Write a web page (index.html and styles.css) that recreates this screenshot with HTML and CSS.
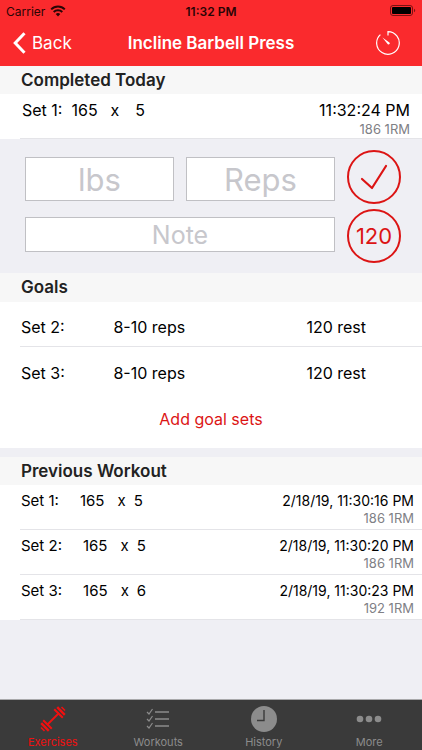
FILE: index.html
```html
<!DOCTYPE html>
<html lang="en">
<head>
    <meta charset="UTF-8">
    <meta name="viewport" content="width=device-width, initial-scale=1.0">
    <title>Incline Barbell Press</title>
    <link rel="stylesheet" href="styles.css">
</head>
<body>
    <!-- Status bar and navigation -->
    <header class="top">
        <div class="status-bar">
            <div class="carrier">
                <span>Carrier</span>
                <svg width="16" height="12" viewBox="0 0 16 12" fill="none" stroke="#2a0505" stroke-width="2">
                    <path d="M1.2 4.4a9.6 9.6 0 0 1 13.6 0"/>
                    <path d="M3.7 7a6.1 6.1 0 0 1 8.6 0"/>
                    <path d="M8 11.4 5.7 9a3.3 3.3 0 0 1 4.6 0Z" fill="#2a0505" stroke="none"/>
                </svg>
            </div>
            <span class="time">11:32 PM</span>
            <svg class="battery" width="26" height="12" viewBox="0 0 26 12">
                <rect x="0.5" y="0.5" width="22" height="10" rx="2.5" fill="none" stroke="#7a1212"/>
                <rect x="2" y="2" width="19" height="7" rx="1" fill="#000"/>
                <path d="M24 3.8c1.6.4 1.6 3 0 3.4Z" fill="#7a1212"/>
            </svg>
        </div>
        <nav class="nav-bar">
            <a href="#" class="back">
                <svg width="13" height="22" viewBox="0 0 13 22" fill="none" stroke="#fff" stroke-width="3">
                    <path d="M11.5 1.2 2.2 11l9.3 9.8"/>
                </svg>
                Back
            </a>
            <h1>Incline Barbell Press</h1>
            <button class="timer" aria-label="Rest timer">
                <svg width="26" height="26" viewBox="0 0 26 26" fill="none" stroke="#fff" stroke-width="1.2">
                    <path d="M13 5.5V1.7a11.3 11.3 0 1 1-7.6 2.9"/>
                    <path d="m7.4 7.4 7 5a1.2 1.2 0 0 1-1.6 1.8Z" fill="#fff" stroke="none"/>
                </svg>
            </button>
        </nav>
    </header>

    <main>
        <!-- Completed sets -->
        <section>
            <h2>Completed Today</h2>
            <ul class="sets completed">
                <li>
                    <div class="lift">
                        <span>Set 1:</span>
                        <span>165</span>
                        <span>x</span>
                        <span>5</span>
                    </div>
                    <div class="when">
                        <span>11:32:24 PM</span>
                        <small>186 1RM</small>
                    </div>
                </li>
            </ul>
        </section>

        <!-- New set form -->
        <form class="entry">
            <div class="fields">
                <input class="big" type="text" placeholder="lbs" aria-label="Weight in lbs">
                <input class="big" type="text" placeholder="Reps" aria-label="Reps">
                <input class="note" type="text" placeholder="Note" aria-label="Note">
            </div>
            <div class="actions">
                <button type="button" class="round" aria-label="Save set">
                    <svg width="28" height="26" viewBox="0 0 28 26" fill="none" stroke="#dc1414" stroke-width="2.2" stroke-linecap="round" stroke-linejoin="round">
                        <path d="M2 15l10 9L26 2"/>
                    </svg>
                </button>
                <button type="button" class="round">120</button>
            </div>
        </form>

        <!-- Goals -->
        <section class="goals">
            <h2>Goals</h2>
            <table>
                <tr>
                    <td>Set 2:</td>
                    <td>8-10 reps</td>
                    <td>120 rest</td>
                </tr>
                <tr>
                    <td>Set 3:</td>
                    <td>8-10 reps</td>
                    <td>120 rest</td>
                </tr>
            </table>
            <button class="add">Add goal sets</button>
        </section>

        <!-- Previous workout -->
        <section class="previous">
            <h2>Previous Workout</h2>
            <ul class="sets">
                <li>
                    <div class="lift">
                        <span>Set 1:</span>
                        <span>165</span>
                        <span>x</span>
                        <span>5</span>
                    </div>
                    <div class="when">
                        <span>2/18/19, 11:30:16 PM</span>
                        <small>186 1RM</small>
                    </div>
                </li>
                <li>
                    <div class="lift">
                        <span>Set 2:</span>
                        <span>165</span>
                        <span>x</span>
                        <span>5</span>
                    </div>
                    <div class="when">
                        <span>2/18/19, 11:30:20 PM</span>
                        <small>186 1RM</small>
                    </div>
                </li>
                <li>
                    <div class="lift">
                        <span>Set 3:</span>
                        <span>165</span>
                        <span>x</span>
                        <span>6</span>
                    </div>
                    <div class="when">
                        <span>2/18/19, 11:30:23 PM</span>
                        <small>192 1RM</small>
                    </div>
                </li>
            </ul>
        </section>
    </main>

    <!-- Tab bar -->
    <nav class="tab-bar">
        <a href="#" class="active">
            <svg width="28" height="28" viewBox="0 0 28 28" stroke="currentColor" fill="none">
                <path d="M8 20 20 8" stroke-width="1.8"/>
                <path d="m4.2 15.2 8.6 8.6M15.2 4.2l8.6 8.6" stroke-width="2"/>
                <path d="m2.2 18.2 7.6 7.6M18.2 2.2l7.6 7.6" stroke-width="2.4"/>
                <path d="m2 22.5 3.5 3.5M22.5 2l3.5 3.5" stroke-width="1.6"/>
            </svg>
            Exercises
        </a>
        <a href="#">
            <svg width="28" height="28" viewBox="0 0 28 28" stroke="currentColor" fill="none">
                <path d="M11 7h14M11 14h14M11 21h14" stroke-width="1.3"/>
                <path d="m3 7 2 2 3.5-5M3 14l2 2 3.5-5M3 21l2 2 3.5-5" stroke-width="1.2"/>
            </svg>
            Workouts
        </a>
        <a href="#">
            <svg width="28" height="28" viewBox="0 0 28 28">
                <circle cx="14" cy="14" r="13" fill="currentColor"/>
                <path d="M14 5v10.5H7" fill="none" stroke="#3a3a3a" stroke-width="1.4"/>
            </svg>
            History
        </a>
        <a href="#">
            <svg width="28" height="28" viewBox="0 0 28 28" fill="currentColor">
                <circle cx="5" cy="14" r="3.3"/>
                <circle cx="14" cy="14" r="3.3"/>
                <circle cx="23" cy="14" r="3.3"/>
            </svg>
            More
        </a>
    </nav>
</body>
</html>
```
FILE: styles.css
```css
/* General Styles */
* {
    box-sizing: border-box;
}

body {
    margin: 0;
    min-height: 100vh;
    display: flex;
    flex-direction: column;
    background: #efeff4;
    color: #000;
    font-family: Inter, Roboto, sans-serif;
    font-size: 16px;
}

a {
    color: inherit;
    text-decoration: none;
}

button {
    font-family: inherit;
    background: none;
    border: none;
    padding: 0;
    cursor: pointer;
}

svg {
    display: block;
}

/* Header */
.top {
    background: #fa2a2d;
}

.status-bar {
    display: grid;
    grid-template-columns: 1fr auto 1fr;
    align-items: center;
    height: 22px;
    padding: 0 6px;
    font-size: 12px;
    color: #2a0505;
}

.carrier {
    display: flex;
    align-items: center;
    gap: 5px;
}

.time {
    font-weight: 600;
}

.battery {
    justify-self: end;
}

.nav-bar {
    display: grid;
    grid-template-columns: 1fr auto 1fr;
    align-items: center;
    height: 44px;
    padding: 0 13px 2px;
    color: #fff;
}

.back {
    display: flex;
    align-items: center;
    gap: 6px;
    font-size: 17px;
}

h1 {
    margin: 0;
    font-size: 17px;
    font-weight: 600;
}

.timer {
    justify-self: end;
    margin-right: 8px;
}

/* Section headings */
h2 {
    margin: 0;
    padding: 0 21px;
    background: #f7f7f7;
    color: #222;
    font-size: 17px;
    font-weight: 600;
    line-height: 28px;
}

/* Set lists */
.sets {
    margin: 0;
    padding: 0 0 0 20px;
    list-style: none;
    background: #fff;
    font-size: 15px;
}

.sets li {
    display: flex;
    justify-content: space-between;
    height: 45px;
    padding: 5px 8px 0 1px;
    border-bottom: 1px solid #e4e4e8;
}

.lift {
    display: flex;
    line-height: 22px;
}

.lift span:nth-child(2) {
    margin: 0 13px 0 21px;
}

.lift span:nth-child(3) {
    margin-right: 8px;
}

.when {
    display: flex;
    flex-direction: column;
    text-align: right;
    font-size: 14px;
    line-height: 22px;
}

.when small {
    color: #808085;
    font-size: 13px;
    line-height: 12px;
}

.completed li {
    padding: 5px 12px 0 2px;
}

.completed .lift {
    font-size: 16px;
}

.completed .lift span:nth-child(2) {
    margin: 0 13px 0 9px;
}

.completed .lift span:nth-child(3) {
    margin-right: 16px;
}

.completed .when {
    font-size: 16px;
}

.completed small {
    line-height: 16px;
}

/* New set form */
.entry {
    display: flex;
    align-items: center;
    gap: 12px;
    padding: 11px 21px 10px 25px;
}

.fields {
    flex: 1;
    display: grid;
    grid-template-columns: 1fr 1fr;
    gap: 16px 12px;
    padding-bottom: 4px;
}

.fields input {
    width: 100%;
    min-width: 0;
    padding: 0;
    border: 1px solid #c0c0c4;
    border-radius: 0;
    background: #fff;
    font-family: inherit;
    text-align: center;
}

.fields input::placeholder {
    color: #c7c7cc;
    opacity: 1;
}

.big {
    height: 44px;
    font-size: 31px;
}

.note {
    grid-column: span 2;
    height: 35px;
    font-size: 25px;
}

.actions {
    display: grid;
    gap: 5px;
}

.round {
    display: flex;
    align-items: center;
    justify-content: center;
    width: 54px;
    height: 54px;
    border: 2px solid #dc1414;
    border-radius: 50%;
    color: #dc1414;
    font-size: 22px;
}

/* Goals */
.goals {
    background: #fff;
}

.goals h2 {
    line-height: 29px;
}

.goals table {
    width: 100%;
    padding-left: 20px;
    border-spacing: 0;
    table-layout: fixed;
    font-size: 16px;
}

.goals td {
    height: 45px;
    padding: 6px 0 0 1px;
}

.goals tr:first-child td {
    border-bottom: 1px solid #e4e4e8;
}

.goals td:first-child {
    width: 23%;
}

.goals td:last-child {
    width: 29%;
}

.add {
    display: block;
    width: 100%;
    height: 56px;
    padding-bottom: 2px;
    color: #dc1414;
    font-size: 16px;
}

/* Previous workout */
.previous {
    margin-top: 9px;
}

/* Tab Bar */
.tab-bar {
    display: grid;
    grid-template-columns: repeat(4, 1fr);
    margin-top: auto;
    height: 51px;
    padding-top: 5px;
    border-top: 1px solid #a9a9ab;
    background: #3a3a3a;
    color: #8c8c8c;
    font-size: 11px;
    line-height: 18px;
}

.tab-bar a {
    display: flex;
    flex-direction: column;
    align-items: center;
}

.tab-bar .active {
    color: #f01010;
}
```
